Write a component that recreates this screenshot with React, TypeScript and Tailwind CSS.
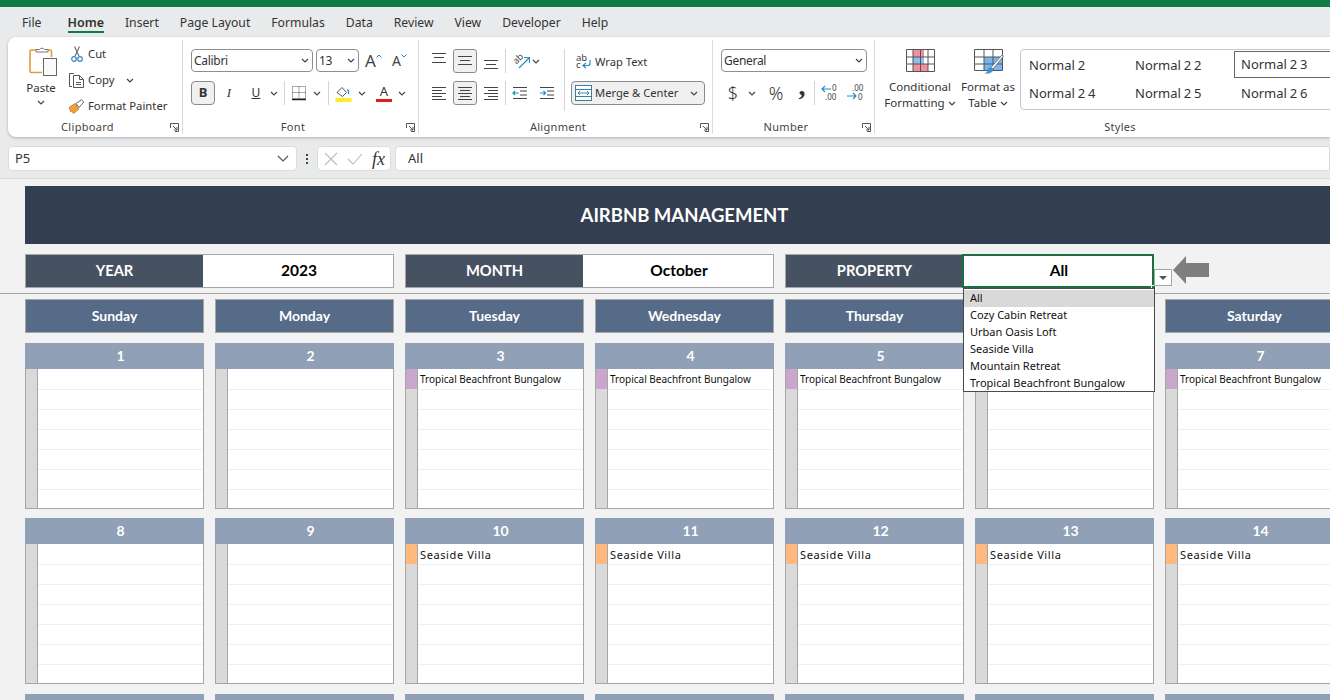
import React from "react";

const UI = { fontFamily: '"Noto Sans", "Open Sans", sans-serif' };
const SHEET = { fontFamily: 'Lato, "Noto Sans", sans-serif' };

const Chev = ({ className = "" }: { className?: string }) => (
  <svg width="8" height="5" viewBox="0 0 8 5" className={`shrink-0 ${className}`} fill="none" stroke="#444" strokeWidth="1.2">
    <path d="M1 1l3 3 3-3" />
  </svg>
);

const Launcher = () => (
  <svg width="9" height="9" viewBox="0 0 9 9" fill="none" stroke="#555" strokeWidth="1">
    <path d="M.5 5V.5H8.500V8.500H5" />
    <path d="M3 3l4 4M7 4v3H4" />
  </svg>
);

const Sep = ({ h = 24 }: { h?: number }) => (
  <div className="w-px bg-[#d4d4d4] shrink-0" style={{ height: h }} />
);

const Lines = ({ rows }: { rows: [number, number, number][] }) => (
  <svg width="16" height="16" viewBox="0 0 16 16" stroke="#444" strokeWidth="1">
    {rows.map((r, i) => (
      <path key={i} d={`M${r[0]} ${r[2] + 0.5}H${r[1]}`} />
    ))}
  </svg>
);

const Cell = ({ active, children }: { active?: boolean; children: React.ReactNode }) => (
  <div
    className={`w-[24px] h-[24px] flex items-center justify-center rounded-[3px] shrink-0 ${
      active ? "bg-[#f0f0f0] border border-[#8a8a8a]" : ""
    }`}
  >
    {children}
  </div>
);

const Combo = ({ text, w }: { text: string; w: number }) => (
  <div
    className="h-[23px] border border-[#8f8f8f] rounded-[4px] flex items-center justify-between pl-[2px] pr-[3px] text-[12px] text-[#333] bg-white shrink-0"
    style={{ width: w }}
  >
    <span className="tracking-[-0.3px]">{text}</span>
    <Chev />
  </div>
);

const Group = ({
  w,
  label,
  launcher = true,
  last,
  children,
}: {
  w: number;
  label: string;
  launcher?: boolean;
  last?: boolean;
  children: React.ReactNode;
}) => (
  <div
    className={`flex flex-col my-[3px] shrink-0 ${last ? "" : "border-r border-[#dcdcdc]"}`}
    style={{ width: w }}
  >
    <div className="flex-1 min-h-0">{children}</div>
    <div
      className={`relative h-[16px] mb-[-1px] flex items-center justify-center text-[11px] text-[#444] tracking-[0.3px] ${
        launcher ? "pr-[15px]" : ""
      }`}
    >
      {label}
      {launcher && (
        <span className="absolute right-[3px] top-[4px] flex">
          <Launcher />
        </span>
      )}
    </div>
  </div>
);

const PasteIcon = () => (
  <svg width="30" height="32" viewBox="0 0 30 32" fill="none">
    <path d="M8 5H3.500A1.500 1.500 0 0 0 2 6.500V26a1.500 1.500 0 0 0 1.500 1.500H14" stroke="#e39a3b" strokeWidth="1.600" />
    <path d="M20 5h2a1.500 1.500 0 0 1 1.500 1.500V12" stroke="#e39a3b" strokeWidth="1.600" />
    <path d="M8 7V4.500h3.500a3 3 0 0 1 5 0H20V7z" fill="#fff" stroke="#777" strokeWidth="1" />
    <rect x="15.500" y="13.500" width="13" height="17" fill="#fafafa" stroke="#666" strokeWidth="1" />
  </svg>
);

const CutIcon = () => (
  <svg width="12" height="16" viewBox="0 0 12 16" fill="none">
    <path d="M3.500 .5L8 10M8.500 .5L4 10" stroke="#666" strokeWidth="1.100" />
    <circle cx="3" cy="13" r="2.300" stroke="#3a87bf" strokeWidth="1.200" />
    <circle cx="9" cy="13" r="2.300" stroke="#3a87bf" strokeWidth="1.200" />
  </svg>
);

const CopyIcon = () => (
  <svg width="17" height="16" viewBox="0 0 17 16" fill="none" stroke="#555" strokeWidth="1">
    <path d="M4 14.500H1.500V1.500H6" />
    <path d="M5.500 3.500H11.500L15.500 7.500V15.500H5.500z" fill="#fff" />
    <path d="M11.500 3.500V7.500H15.500M8 10.500H13M8 12.500H13" />
  </svg>
);

const PainterIcon = () => (
  <svg width="17" height="15" viewBox="0 0 17 15" fill="none">
    <path d="M1 8.500L7 4.500 11 10 5.500 14.500 3.500 12 2.800 12.800z" fill="#f0a03c" stroke="#c97a1c" strokeWidth=".8" />
    <path d="M8 4.500L13.500 .8 15.800 3 11 8.500z" fill="#fff" stroke="#666" strokeWidth="1" />
  </svg>
);

const BorderIcon = () => (
  <svg width="16" height="16" viewBox="0 0 16 16" fill="none" stroke="#555" strokeWidth="1">
    <path d="M1.500 1.500H14.500V13.500H1.500zM8 1.500V13.500M1.500 7.500H14.500" strokeDasharray="1 1" />
    <path d="M1 14.500H15" stroke="#222" strokeWidth="1.400" />
  </svg>
);

const FillIcon = () => (
  <svg width="17" height="17" viewBox="0 0 17 17" fill="none">
    <path d="M2 7.500L7 2.500l4.500 5-4 4z" fill="#fff" stroke="#555" strokeWidth="1" />
    <path d="M12.500 4.500c1.500 1.500 1.500 3 1 4.500" stroke="#2a7fc1" strokeWidth="1.400" />
    <rect x="0.500" y="13" width="16" height="4" fill="#f8ee2a" />
  </svg>
);

const OrientIcon = () => (
  <svg width="18" height="16" viewBox="0 0 18 16" fill="none">
    <text fontSize="9" fill="#444" transform="translate(4.500 11.500) rotate(-45)" style={UI}>
      ab
    </text>
    <path d="M7 15L17 5M12 4.500H17.500V10" stroke="#2a8fb5" strokeWidth="1.200" />
  </svg>
);

const WrapIcon = () => (
  <svg width="16" height="18" viewBox="0 0 16 18" fill="none">
    <text x="0" y="8" fontSize="9.500" fill="#444" style={UI}>
      ab
    </text>
    <text x="0" y="15" fontSize="9.500" fill="#444" style={UI}>
      c
    </text>
    <path d="M14 7v3.500a2 2 0 0 1-2 2H7.500M10 10l-3 2.500 3 2.500" stroke="#2a8fb5" strokeWidth="1.200" />
  </svg>
);

const MergeIcon = () => (
  <svg width="17" height="16" viewBox="0 0 17 16" fill="none" stroke="#3b7f9e" strokeWidth="1">
    <rect x=".5" y=".5" width="16" height="15" fill="#fff" />
    <path d="M.5 4.500H16.500M.5 11.500H16.500" />
    <path d="M3 8H14M5 6L3 8l2 2M12 6l2 2-2 2" stroke="#2a8fb5" />
  </svg>
);

const IndentIcon = ({ flip }: { flip?: boolean }) => (
  <svg width="16" height="14" viewBox="0 0 16 14" fill="none">
    <path d="M1 1.500H15M8 5H15M8 9H15M1 12.500H15" stroke="#444" />
    {flip ? (
      <path d="M1 7H6.500M4.500 5L6.500 7 4.500 9" stroke="#1d8bc5" strokeWidth="1.200" />
    ) : (
      <path d="M1 7H6.500M3 5L1 7 3 9" stroke="#1d8bc5" strokeWidth="1.200" />
    )}
  </svg>
);

const DecIcon = ({ inc }: { inc?: boolean }) => (
  <svg width="18" height="18" viewBox="0 0 18 18" fill="none">
    {inc ? (
      <>
        <text x="5" y="7" fontSize="8" fill="#444" style={UI}>
          .00
        </text>
        <text x="11" y="16" fontSize="8" fill="#444" style={UI}>
          0
        </text>
        <path d="M0 12H9M6 9l3 3-3 3" stroke="#1d8bc5" strokeWidth="1.100" />
      </>
    ) : (
      <>
        <text x="11" y="7" fontSize="8" fill="#444" style={UI}>
          0
        </text>
        <text x="4" y="16" fontSize="8" fill="#444" style={UI}>
          .00
        </text>
        <path d="M1 5H10M4 2L1 5l3 3" stroke="#1d8bc5" strokeWidth="1.100" />
      </>
    )}
  </svg>
);

const CondIcon = () => (
  <svg width="29" height="23" viewBox="0 0 29 23" fill="none">
    <rect x="7" y="1" width="11" height="7" fill="#f58e9c" />
    <rect x="7" y="8" width="11" height="7" fill="#8fbdec" />
    <rect x="7" y="15" width="15" height="7" fill="#f58e9c" />
    <path d="M.5.5H28.500V22.500H.5zM.5 8H28.500M.5 15H28.500M7 .5V22.500M14.500.5V22.500M22 .5V22.500" stroke="#555" strokeWidth="1" />
  </svg>
);

const TableIcon = () => (
  <svg width="31" height="28" viewBox="0 0 31 28" fill="none">
    <rect x="10" y="8" width="18" height="14" fill="#7ab6ee" />
    <path d="M.5.5H28.500V21.500H.5zM.5 8H28.500M.5 15H28.500M10 .5V21.500M19 .5V21.500" stroke="#555" strokeWidth="1" />
    <path d="M29.500 7L19 20l-2-1.500L28 6z" fill="#fff" stroke="#666" strokeWidth=".8" />
    <path d="M16.500 18.500c2 .5 3 1.500 2.500 3-.8 2.500-4.500 3.500-8.500 3 2.500-1 2.800-2 3-3.500.2-1.500 1.500-2.800 3-2.500z" fill="#3d94d6" />
  </svg>
);

const Ribbon = () => (
  <div className="h-[100px] ml-[8px] bg-white rounded-l-[8px] flex shadow-[0_1px_3px_rgba(0,0,0,0.25)] overflow-hidden shrink-0 text-[#333]">
    <Group w={175} label="Clipboard">
      <div className="flex pl-[17px]">
        <div className="w-[32px] flex flex-col items-center pt-[5px]">
          <span className="flex ml-[3px]">
            <PasteIcon />
          </span>
          <span className="text-[11.500px] leading-[16px] mt-[3px]">Paste</span>
          <Chev className="mt-[4px]" />
        </div>
        <div className="ml-[11px] pt-[1px] flex flex-col text-[11.300px]">
          <div className="h-[26px] flex items-center">
            <span className="w-[20px] flex pl-[3px]">
              <CutIcon />
            </span>
            Cut
          </div>
          <div className="h-[26px] flex items-center">
            <span className="w-[20px] flex">
              <CopyIcon />
            </span>
            Copy
            <Chev className="ml-[12px]" />
          </div>
          <div className="h-[26px] flex items-center">
            <span className="w-[20px] flex">
              <PainterIcon />
            </span>
            Format Painter
          </div>
        </div>
      </div>
    </Group>

    <Group w={236} label="Font">
      <div className="pl-[8px] pt-[9px]">
        <div className="flex items-center h-[23px]">
          <Combo text="Calibri" w={122} />
          <div className="w-[3px]" />
          <Combo text="13" w={43} />
          <span className="ml-[6px] text-[17px] leading-none text-[#444]">A</span>
          <svg width="6" height="4" viewBox="0 0 6 4" fill="none" stroke="#2a7fc1" className="mb-[9px]">
            <path d="M.5 3.500L3 1l2.500 2.500" />
          </svg>
          <span className="ml-[10px] text-[14px] leading-none text-[#444]">A</span>
          <svg width="6" height="4" viewBox="0 0 6 4" fill="none" stroke="#2a7fc1" className="mb-[9px]">
            <path d="M.5.5L3 3 5.500.5" />
          </svg>
        </div>
        <div className="flex items-center h-[24px] mt-[9px]">
          <div className="w-[24px] h-[24px] bg-[#f0f0f0] border border-[#8a8a8a] rounded-[4px] flex items-center justify-center text-[13px] font-bold text-[#333]">
            B
          </div>
          <span className="w-[26px] ml-[1px] text-center text-[13px] italic" style={{ fontFamily: '"Liberation Serif", serif' }}>
            I
          </span>
          <span className="w-[28px] text-center text-[12px] underline">U</span>
          <Chev />
          <div className="w-[6px]" />
          <Sep />
          <span className="ml-[6px] flex">
            <BorderIcon />
          </span>
          <Chev className="ml-[6px]" />
          <div className="w-[7px]" />
          <Sep />
          <span className="ml-[6px] flex">
            <FillIcon />
          </span>
          <Chev className="ml-[6px]" />
          <span className="ml-[10px] w-[16px] flex flex-col items-center text-[13px] leading-[13px] text-[#333]">
            A<span className="w-[16px] h-[3px] bg-[#e01b1b] mt-[1px]" />
          </span>
          <Chev className="ml-[6px]" />
        </div>
      </div>
    </Group>

    <Group w={294} label="Alignment">
      <div className="flex pl-[8px] pt-[9px]">
        <div className="w-[137px] shrink-0">
          <div className="flex items-center h-[24px] gap-[2px]">
            <Cell>
              <Lines rows={[[1, 15, 0], [3, 13, 4], [1, 15, 9]]} />
            </Cell>
            <Cell active>
              <Lines rows={[[1, 15, 3], [3, 13, 7], [1, 15, 11]]} />
            </Cell>
            <Cell>
              <Lines rows={[[1, 15, 7], [3, 13, 11], [1, 15, 15]]} />
            </Cell>
            <Sep />
            <span className="ml-[4px] flex">
              <OrientIcon />
            </span>
            <Chev />
          </div>
          <div className="flex items-center h-[24px] gap-[2px] mt-[8px]">
            <Cell>
              <Lines rows={[[1, 15, 2], [1, 11, 5], [1, 15, 8], [1, 11, 11], [1, 15, 14]]} />
            </Cell>
            <Cell active>
              <Lines rows={[[1, 15, 2], [3, 13, 5], [1, 15, 8], [3, 13, 11], [1, 15, 14]]} />
            </Cell>
            <Cell>
              <Lines rows={[[1, 15, 2], [5, 15, 5], [1, 15, 8], [5, 15, 11], [1, 15, 14]]} />
            </Cell>
            <Sep />
            <span className="ml-[4px] flex">
              <IndentIcon />
            </span>
            <span className="ml-[9px] flex">
              <IndentIcon flip />
            </span>
          </div>
        </div>
        <Sep h={62} />
        <div className="ml-[6px] pt-[1px] flex flex-col w-[134px]">
          <div className="h-[24px] flex items-center pl-[5px] text-[11.200px] gap-[3px]">
            <WrapIcon />
            Wrap Text
          </div>
          <div className="h-[24px] mt-[7px] flex items-center bg-[#f0f0f0] border border-[#8a8a8a] rounded-[4px] pl-[3px] pr-[6px] text-[11.200px]">
            <MergeIcon />
            <span className="ml-[3px]">Merge &amp; Center</span>
            <Chev className="ml-auto" />
          </div>
        </div>
      </div>
    </Group>

    <Group w={162} label="Number">
      <div className="pl-[8px] pt-[9px]">
        <Combo text="General" w={146} />
        <div className="flex items-center h-[24px] mt-[9px] text-[#333]">
          <span className="w-[24px] text-center text-[18px] font-light leading-none">$</span>
          <Chev className="ml-[3px]" />
          <span className="ml-[8px] w-[24px] text-center text-[18px] font-light leading-none">%</span>
          <span
            className="ml-[4px] w-[20px] text-center text-[28px] font-bold leading-[24px] mb-[14px]"
            style={{ fontFamily: '"Liberation Serif", serif' }}
          >
            ,
          </span>
          <div className="w-[2px]" />
          <Sep />
          <span className="ml-[6px] flex">
            <DecIcon />
          </span>
          <span className="ml-[8px] flex">
            <DecIcon inc />
          </span>
        </div>
      </div>
    </Group>

    <Group w={490} label="Styles" launcher={false} last>
      <div className="flex pl-[7px] pt-[9px] whitespace-nowrap">
        <div className="w-[76px] flex flex-col items-center text-[11.500px] leading-[16px]">
          <CondIcon />
          <span className="mt-[7px]">Conditional</span>
          <span className="flex items-center gap-[3px]">
            Formatting
            <Chev />
          </span>
        </div>
        <div className="ml-[2px] w-[56px] flex flex-col items-center text-[11.500px] leading-[16px]">
          <span className="pl-[3px] h-[28px] flex">
            <TableIcon />
          </span>
          <span className="mt-[2px]">Format as</span>
          <span className="flex items-center gap-[3px]">
            Table
            <Chev />
          </span>
        </div>
        <div className="ml-[4px] w-[340px] h-[61px] pt-[1px] border border-[#c8c8c8] rounded-l-[4px] grid grid-cols-[106px_107px_1fr] grid-rows-[28px_28px] text-[13px] text-[#333] [word-spacing:-0.5px]">
          <div className="pl-[8px] pt-[2px] flex items-center">Normal 2</div>
          <div className="pl-[8px] pt-[2px] flex items-center">Normal 2 2</div>
          <div className="flex items-center border border-[#666] pl-[6px] pt-[1px] h-[27px]">Normal 2 3</div>
          <div className="pl-[8px] pt-[2px] flex items-center">Normal 2 4</div>
          <div className="pl-[8px] pt-[2px] flex items-center">Normal 2 5</div>
          <div className="pl-[7px] pt-[2px] flex items-center">Normal 2 6</div>
        </div>
      </div>
    </Group>
  </div>
);

const FormulaBar = () => (
  <div className="h-[41px] shrink-0 flex items-start pt-[9px] pl-[8px] text-[#333]">
    <div className="w-[289px] h-[25px] bg-white border border-[#dcdcdc] rounded-[4px] flex items-center justify-between pl-[6px] pr-[7px] text-[13px]">
      P5
      <svg width="12" height="7" viewBox="0 0 12 7" fill="none" stroke="#555" strokeWidth="1.200">
        <path d="M1 1l5 5 5-5" />
      </svg>
    </div>
    <div className="w-[20px] h-[25px] flex flex-col items-center justify-center gap-[2px]">
      <span className="w-[2px] h-[2px] bg-[#444]" />
      <span className="w-[2px] h-[2px] bg-[#444]" />
      <span className="w-[2px] h-[2px] bg-[#444]" />
    </div>
    <div className="w-[74px] h-[25px] bg-white border border-[#dcdcdc] rounded-[4px] flex items-center pl-[6px]">
      <svg width="14" height="14" viewBox="0 0 14 14" fill="none" stroke="#bcbcbc" strokeWidth="1.100">
        <path d="M1 1l12 12M13 1L1 13" />
      </svg>
      <svg width="16" height="12" viewBox="0 0 16 12" fill="none" stroke="#bcbcbc" strokeWidth="1.100" className="ml-[9px]">
        <path d="M1 6l5 5L15 1" />
      </svg>
      <span className="ml-[9px] text-[18px] italic leading-none text-[#333]" style={{ fontFamily: '"Liberation Serif", serif' }}>
        fx
      </span>
    </div>
    <div className="ml-[4px] flex-1 h-[25px] bg-white border border-[#dcdcdc] rounded-l-[4px] flex items-center pl-[12px] text-[13px]">
      All
    </div>
  </div>
);

const Filter = ({ label, value, selected }: { label: string; value: string; selected?: boolean }) => (
  <div className="relative w-[369px] h-[34px] flex border border-[#a6a6a6]">
    <div className="w-[177px] pb-[1px] bg-[#465261] text-white font-bold text-[14.700px] flex items-center justify-center">{label}</div>
    <div className="flex-1 pl-[2px] pb-[1px] bg-white text-black font-bold text-[15.500px] flex items-center justify-center">{value}</div>
    {selected && (
      <>
        <div className="absolute left-[176px] right-[-1px] top-[-1px] bottom-[-1px] border-2 border-[#1f6e43]" />
        <div className="absolute right-[-3px] bottom-[-3px] w-[5px] h-[5px] bg-[#1f6e43] border border-white" />
        <div className="absolute left-[368px] top-[14px] w-[18px] h-[17px] bg-white border border-[#a6a6a6] flex items-center justify-center">
          <svg width="8" height="4" viewBox="0 0 8 4" fill="#555">
            <path d="M0 0h8L4 4z" />
          </svg>
        </div>
        <svg width="36" height="28" viewBox="0 0 36 28" fill="#7f7f7f" className="absolute left-[387px] top-[1px]">
          <path d="M13 0v7h23v14H13v7L0 14z" />
        </svg>
      </>
    )}
  </div>
);

const Day = ({ n, event, color, wide }: { n: number; event?: string; color?: string; wide?: boolean }) => (
  <div className="w-[179px] h-[166px] flex flex-col shrink-0">
    <div className="h-[26px] pb-[1px] bg-[#8fa0b7] text-white font-bold text-[14px] flex items-center justify-center pl-[12px]">{n}</div>
    <div className="h-[140px] flex bg-white border-x border-b border-[#a6a6a6]">
      <div className="w-[12px] bg-[#d9d9d9] border-r border-[#a6a6a6] shrink-0">
        <div className="h-[20px]" style={{ backgroundColor: color }} />
      </div>
      <div className="flex-1 flex flex-col">
        <div
          className={`h-[21px] border-b border-[#efefef] pl-[2px] flex items-center text-[#111] whitespace-nowrap ${
            wide ? "text-[11px] tracking-[0.6px] pt-[2px]" : "text-[10px]"
          }`}
          style={UI}
        >
          {event}
        </div>
        {[0, 1, 2, 3, 4].map((i) => (
          <div key={i} className="h-[20px] border-b border-[#efefef]" />
        ))}
      </div>
    </div>
  </div>
);

const PURPLE = "#c9a6cb";
const ORANGE = "#ffb97f";
const TB = "Tropical Beachfront Bungalow";
const SV = "Seaside Villa";

const days = ["Sunday", "Monday", "Tuesday", "Wednesday", "Thursday", "Friday", "Saturday"];
const options = ["All", "Cozy Cabin Retreat", "Urban Oasis Loft", "Seaside Villa", "Mountain Retreat", TB];

const Row = ({ start, event, color, from, wide }: { start: number; event: string; color: string; from: number; wide?: boolean }) => (
  <div className="flex gap-x-[11px]">
    {[0, 1, 2, 3, 4, 5, 6].map((i) => (
      <Day key={i} n={start + i} event={i >= from ? event : undefined} color={i >= from ? color : undefined} wide={wide} />
    ))}
  </div>
);

const Sheet = () => (
  <div className="relative flex-1 min-h-0 overflow-hidden bg-[#f2f2f2] border-t border-[#dcdcdc]" style={SHEET}>
    <div className="pl-[25px] pt-[7px] w-[1344px]">
      <div className="h-[58px] pt-[1px] bg-[#333f50] text-white font-bold text-[18.500px] flex items-center justify-center">
        AIRBNB MANAGEMENT
      </div>
      <div className="flex gap-x-[11px] mt-[10px]">
        <Filter label="YEAR" value="2023" />
        <Filter label="MONTH" value="October" />
        <Filter label="PROPERTY" value="All" selected />
      </div>
    </div>
    <div className="h-px bg-[#a6a6a6] mt-[5px]" />
    <div className="pl-[25px] w-[1344px]">
      <div className="flex gap-x-[11px] mt-[5px]">
        {days.map((d) => (
          <div
            key={d}
            className="w-[179px] h-[34px] pb-[1px] bg-[#556b87] border border-[#a6a6a6] text-white font-bold text-[14px] flex items-center justify-center shrink-0"
          >
            {d}
          </div>
        ))}
      </div>
      <div className="mt-[10px] flex flex-col">
        <Row start={1} event={TB} color={PURPLE} from={2} />
        <div className="h-[9px]" />
        <Row start={8} event={SV} color={ORANGE} from={2} wide />
        <div className="h-[10px]" />
        <Row start={15} event="" color="" from={7} />
      </div>
    </div>
    <div
      className="absolute left-[963px] top-[109px] w-[192px] h-[104px] bg-white border border-[#4a4a4a] pt-[1px] text-[11px] text-[#111]"
      style={UI}
    >
      {options.map((o, i) => (
        <div key={o} className={`h-[17px] pl-[6px] flex items-center ${i === 0 ? "bg-[#d9d9d9]" : ""}`}>
          {o}
        </div>
      ))}
    </div>
  </div>
);

export default function App() {
  return (
    <div className="w-[1330px] h-[700px] flex flex-col overflow-hidden bg-[#e9eaec]" style={UI}>
      <div className="h-[7px] bg-[#107c41] shrink-0" />
      <div className="h-[30px] pt-[2px] shrink-0 flex items-center pl-[22px] gap-x-[21px] text-[12.200px] text-[#333]">
        <span className="mr-[5px]">File</span>
        <span className="relative font-semibold text-[12.500px]">
          Home
          <span className="absolute left-0 right-0 top-[17px] h-[2px] bg-[#107c41]" />
        </span>
        <span>Insert</span>
        <span>Page Layout</span>
        <span>Formulas</span>
        <span>Data</span>
        <span>Review</span>
        <span>View</span>
        <span>Developer</span>
        <span>Help</span>
      </div>
      <Ribbon />
      <FormulaBar />
      <Sheet />
    </div>
  );
}
